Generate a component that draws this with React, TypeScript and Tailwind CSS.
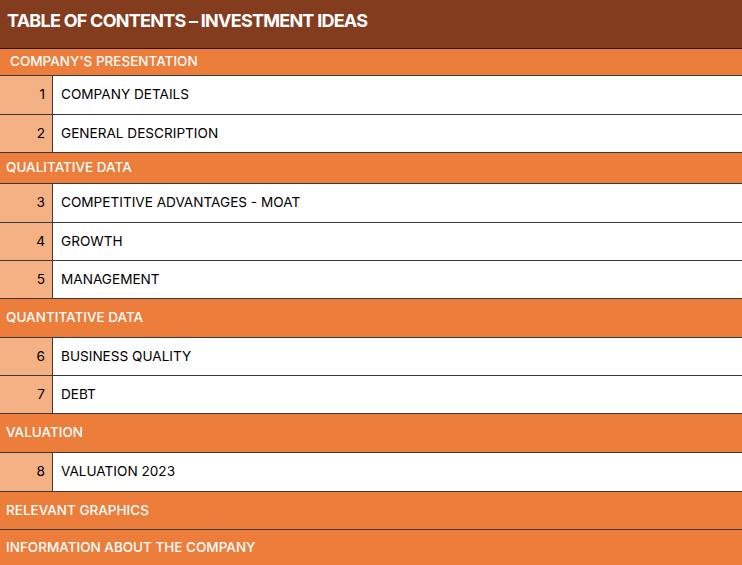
import React from "react";

type Row =
  | { kind: "section"; label: string; h: string; indent?: boolean; last?: boolean }
  | { kind: "item"; n: number; label: string; h: string };

const rows: Row[] = [
  { kind: "section", label: "COMPANY'S PRESENTATION", h: "h-[27px]", indent: true },
  { kind: "item", n: 1, label: "COMPANY DETAILS", h: "h-[39px]" },
  { kind: "item", n: 2, label: "GENERAL DESCRIPTION", h: "h-[38px]" },
  { kind: "section", label: "QUALITATIVE DATA", h: "h-[31px]" },
  { kind: "item", n: 3, label: "COMPETITIVE ADVANTAGES - MOAT", h: "h-[39px]" },
  { kind: "item", n: 4, label: "GROWTH", h: "h-[38px]" },
  { kind: "item", n: 5, label: "MANAGEMENT", h: "h-[38px]" },
  { kind: "section", label: "QUANTITATIVE DATA", h: "h-[39px]" },
  { kind: "item", n: 6, label: "BUSINESS QUALITY", h: "h-[38px]" },
  { kind: "item", n: 7, label: "DEBT", h: "h-[38px]" },
  { kind: "section", label: "VALUATION", h: "h-[39px]" },
  { kind: "item", n: 8, label: "VALUATION 2023", h: "h-[39px]" },
  { kind: "section", label: "RELEVANT GRAPHICS", h: "h-[38px]" },
  { kind: "section", label: "INFORMATION ABOUT THE COMPANY", h: "h-[35px]", last: true },
];

export default function App() {
  return (
    <div
      className="w-[742px] h-[565px] overflow-hidden bg-white flex flex-col"
      style={{ fontFamily: "Inter, 'Noto Sans', sans-serif" }}
    >
      <div className="h-[49px] shrink-0 bg-[#843C1F] border-b border-[#2a1608] pl-[7px] pt-[9px]">
        <span className="text-white font-bold text-[18px] tracking-[-0.75px] leading-[24px]">
          TABLE OF CONTENTS – INVESTMENT IDEAS
        </span>
      </div>
      {rows.map((r, i) =>
        r.kind === "section" ? (
          <div
            key={i}
            className={`${r.h} shrink-0 bg-[#ED7D3A] ${r.last ? "" : "border-b border-[#3a3a3a]"} flex items-center ${
              r.indent ? "pl-[10px]" : "pl-[6px]"
            }`}
          >
            <span className="text-white font-medium text-[13.5px] leading-none">{r.label}</span>
          </div>
        ) : (
          <div key={i} className={`${r.h} shrink-0 flex border-b border-[#3a3a3a]`}>
            <div className="w-[53px] shrink-0 bg-[#F4B183] border-r border-[#3a3a3a] flex items-center justify-end pr-[7px]">
              <span className="text-black text-[13.6px] leading-none">{r.n}</span>
            </div>
            <div className="flex-1 flex items-center pl-[8px]">
              <span className="text-black text-[13.6px] leading-none">{r.label}</span>
            </div>
          </div>
        )
      )}
    </div>
  );
}
